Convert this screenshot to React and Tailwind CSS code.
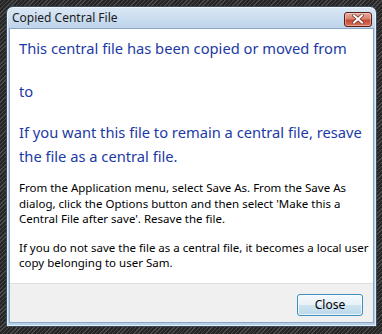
export default function App() {
  const font = { fontFamily: '"Noto Sans", "Open Sans", sans-serif' }

  return (
    <div
      className="w-[382px] h-[334px] pt-[6px] pl-[6px] bg-[repeating-linear-gradient(135deg,#4a4a4a_0px,#4a4a4a_1px,#262626_1px,#262626_3px)]"
      style={font}
    >
      <div className="w-[371px] h-[321px] flex flex-col rounded-t-[7px] border border-[#3b4b5b] bg-[linear-gradient(180deg,#dbe8f5_0px,#bcd3ea_22px,#b4cfe6_100%)] shadow-[inset_0_0_0_1px_rgba(255,255,255,0.6)]">
        <div className="h-[21px] flex items-center justify-between pl-[5px] pr-[4px]">
          <span className="text-[12px] text-[#1b1b1b] leading-none">Copied Central File</span>
          <button className="w-[28px] h-[15px] mt-[3px] flex items-center justify-center rounded-[3px] border border-[#5a1e14] bg-[linear-gradient(180deg,#e9ab9c_0%,#d98270_45%,#c54a33_55%,#d8705a_100%)] shadow-[inset_0_0_0_1px_rgba(255,255,255,0.35)]">
            <svg width="12" height="10" viewBox="0 0 12 10">
              <path d="M2 1.5 L10 8.5 M10 1.5 L2 8.5" stroke="#6b2a20" strokeWidth="3.4" strokeLinecap="square" />
              <path d="M2 1.5 L10 8.5 M10 1.5 L2 8.5" stroke="#ffffff" strokeWidth="2" strokeLinecap="square" />
            </svg>
          </button>
        </div>
        <div className="flex-1 mx-[2px] mb-[3px] flex flex-col border border-[#8aa6c2] bg-white">
          <div className="flex-1 pl-[9px] pr-[3px] pt-[7px]">
            <p className="text-[14.7px] leading-[24px] text-[#1c3aa6]">This central file has been copied or moved from</p>
            <p className="mt-[19px] text-[14.7px] leading-[24px] text-[#1c3aa6]">to</p>
            <p className="mt-[17px] text-[14.7px] leading-[24px] text-[#1c3aa6]">
              If you want this file to remain a central file, resave the file as a central file.
            </p>
            <p className="mt-[12px] text-[11.5px] leading-[15.5px] text-black">
              From the Application menu, select Save As. From the Save As dialog, click the Options button and then select 'Make this a Central File after save'. Resave the file.
            </p>
            <p className="mt-[13px] text-[11.5px] leading-[15.5px] text-black">
              If you do not save the file as a central file, it becomes a local user copy belonging to user Sam.
            </p>
          </div>
          <div className="h-[39px] flex items-start justify-end pt-[10px] pr-[10px] bg-[#f0f0f0] border-t border-[#dfdfdf]">
            <button className="w-[66px] h-[22px] rounded-[3px] border border-[#3c8fbf] bg-[linear-gradient(180deg,#f4f9fc_0%,#e6f1f8_50%,#cfe4f1_51%,#bcd8ea_100%)] shadow-[inset_0_0_0_1px_rgba(255,255,255,0.7)] text-[12px] text-black leading-none">
              Close
            </button>
          </div>
        </div>
      </div>
    </div>
  )
}
